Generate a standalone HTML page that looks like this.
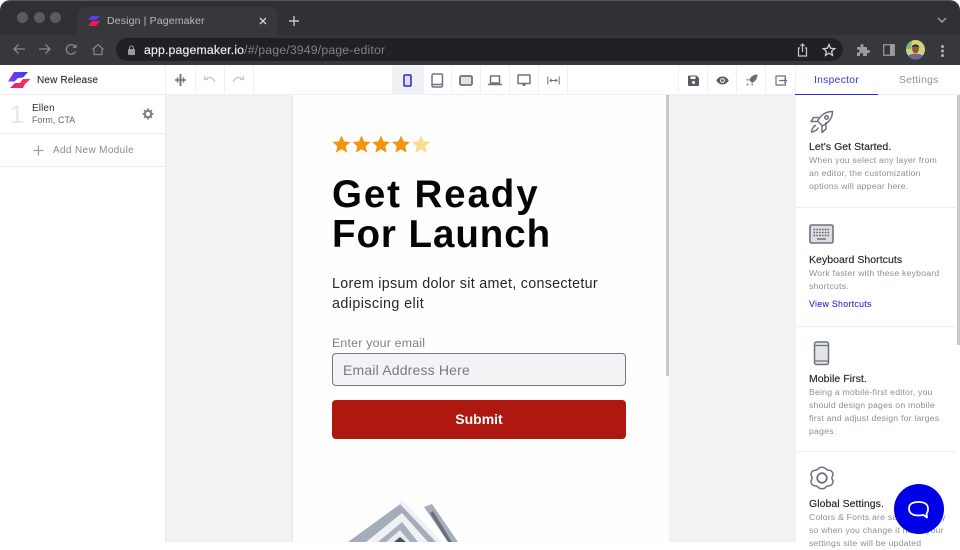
<!DOCTYPE html>
<html><head><meta charset="utf-8"><style>
html,body{margin:0;padding:0;width:960px;height:542px;overflow:hidden;background:#fff;font-family:"Liberation Sans",sans-serif}
.a{position:absolute;white-space:nowrap}
svg{position:absolute;overflow:visible}
.sep{position:absolute;top:66px;width:1px;height:29px;background:#eff0f2}
.ic{fill:none;stroke:#6b7280;stroke-width:1.5;stroke-linecap:round;stroke-linejoin:round}
.t{font-size:10.5px;color:#23262b;left:809px;letter-spacing:.05px;-webkit-text-stroke:.15px #23262b}
.d{font-size:8.7px;color:#8b9097;left:809px;line-height:13px;letter-spacing:.21px}
.hr{position:absolute;left:796px;width:160px;height:1px;background:#eceef1}
</style></head><body>
<!-- browser chrome -->
<div class="a" style="left:0;top:0;width:960px;height:38px;background:#2f3135;border-radius:10px 10px 0 0;border-top:1px solid #55565a;box-sizing:border-box"></div>
<div class="a" style="left:0;top:35px;width:960px;height:30px;background:#36383c"></div>
<div class="a" style="left:78px;top:7px;width:200px;height:31px;background:#36383c;border-radius:8px 8px 0 0"></div>
<div class="a" style="left:17px;top:12px;width:11px;height:11px;border-radius:50%;background:#5a5b5e"></div>
<div class="a" style="left:34px;top:12px;width:11px;height:11px;border-radius:50%;background:#5a5b5e"></div>
<div class="a" style="left:50px;top:12px;width:11px;height:11px;border-radius:50%;background:#5a5b5e"></div>
<svg style="left:87px;top:15px" width="14" height="12" viewBox="0 0 14 12"><path d="M4 1H13L9 5H1Z" fill="#5a3df0"/><path d="M5 6H13L9 11H1Z" fill="#f0185a"/></svg>
<div class="a" style="left:107px;top:15px;font-size:10.5px;color:#b9babc;letter-spacing:.15px">Design | Pagemaker</div>
<svg style="left:258px;top:16px" width="10" height="10" viewBox="0 0 10 10"><path d="M2 2L8 8M8 2L2 8" stroke="#d0d1d3" stroke-width="1.3" fill="none"/></svg>
<svg style="left:288px;top:15px" width="12" height="12" viewBox="0 0 12 12"><path d="M6 1V11M1 6H11" stroke="#c4c5c7" stroke-width="1.4" fill="none"/></svg>
<svg style="left:937px;top:17px" width="10" height="7" viewBox="0 0 10 7"><path d="M1 1L5 5L9 1" stroke="#a9aaac" stroke-width="1.3" fill="none"/></svg>
<svg style="left:12px;top:42px" width="14" height="14" viewBox="0 0 14 14"><path d="M13 7H2M6.500 2.500L2 7L6.500 11.500" stroke="#85878a" stroke-width="1.300" fill="none"/></svg>
<svg style="left:38px;top:42px" width="14" height="14" viewBox="0 0 14 14"><path d="M1 7H12M7.500 2.500L12 7L7.500 11.500" stroke="#85878a" stroke-width="1.300" fill="none"/></svg>
<svg style="left:65px;top:43px" width="13" height="13" viewBox="0 0 13 13"><path d="M10.500 8.500A4.800 4.800 0 1 1 10 3.500" stroke="#85878a" stroke-width="1.300" fill="none"/><path d="M11.500 1V5H7.500Z" fill="#85878a"/></svg>
<svg style="left:91px;top:43px" width="14" height="13" viewBox="0 0 14 13"><path d="M1.500 6.500L7 1.500L12.500 6.500M3 5.500V11.500H11V5.500" stroke="#85878a" stroke-width="1.200" fill="none"/></svg>
<div class="a" style="left:116px;top:38px;width:727px;height:23px;border-radius:12px;background:#202124"></div>
<svg style="left:127px;top:45px" width="9" height="10" viewBox="0 0 9 10"><rect x="1" y="4" width="7" height="6" rx="1" fill="#9a9b9d"/><path d="M2.500 4V3a2 2 0 0 1 4 0V4" stroke="#9a9b9d" fill="none"/></svg>
<div class="a" style="left:144px;top:43px;font-size:12.300px;color:#e8e9ea;letter-spacing:.15px;-webkit-text-stroke:.2px #e8e9ea">app.pagemaker.io<span style="color:#7f8184;-webkit-text-stroke:0">/#/page/3949/page-editor</span></div>
<svg style="left:796px;top:43px" width="13" height="14" viewBox="0 0 13 14"><path d="M4 5H2.500V13H10.500V5H9M6.500 9V1M4.500 3L6.500 1L8.500 3" stroke="#c6c7c9" stroke-width="1.200" fill="none"/></svg>
<svg style="left:822px;top:43px" width="14" height="14" viewBox="0 0 14 14"><path d="M7 1.500L8.600 5.300L12.700 5.600L9.600 8.300L10.500 12.300L7 10.200L3.500 12.300L4.400 8.300L1.300 5.600L5.400 5.300Z" stroke="#d0d1d3" stroke-width="1.300" fill="none"/></svg>
<svg style="left:856px;top:43px" width="14" height="14" viewBox="0 0 14 14"><path d="M1 4H4.500V2.500a1.500 1.500 0 0 1 3 0V4H11V7H12.500a1.500 1.500 0 0 1 0 3H11V13H7V11.500a1.500 1.500 0 0 0-3 0V13H1V9.500H2a1.500 1.500 0 0 0 0-3H1Z" fill="#9b9c9e"/></svg>
<svg style="left:883px;top:44px" width="12" height="12" viewBox="0 0 12 12"><rect x=".7" y=".7" width="10.600" height="10.600" stroke="#9b9c9e" stroke-width="1.200" fill="none"/><rect x="7" y="1" width="4" height="10" fill="#9b9c9e"/></svg>
<svg style="left:906px;top:40px" width="19" height="19" viewBox="0 0 19 19"><circle cx="9.500" cy="9.500" r="9.500" fill="#d9cf7a"/><path d="M0 9A9.500 9.500 0 0 1 6 .7L5 9Z" fill="#7fb98a"/><path d="M2 16C4 13 15 13 17 16A9.500 9.500 0 0 1 2 16Z" fill="#3f74c4"/><path d="M6 15H13L11 18H8Z" fill="#d0492f"/><ellipse cx="9.500" cy="9" rx="3.400" ry="4.300" fill="#8a5a3c"/><path d="M5.800 7.500C6 3.500 13 3.500 13.200 7.500C11 5.800 8 5.800 5.800 7.500Z" fill="#1d1f26"/></svg>
<div class="a" style="left:941px;top:45px;width:2.500px;height:2.500px;border-radius:50%;background:#a9aaac;box-shadow:0 4.500px 0 #a9aaac,0 9px 0 #a9aaac"></div>
<!-- toolbar -->
<div class="a" style="left:0;top:65px;width:960px;height:30px;background:#fff;border-bottom:1px solid #eceef1;box-sizing:border-box"></div>
<svg style="left:7px;top:71px" width="24" height="18" viewBox="0 0 24 18"><defs><linearGradient id="g1" x1="0" x2="1"><stop offset="0" stop-color="#8a3cf0"/><stop offset="1" stop-color="#2b3cf0"/></linearGradient><linearGradient id="g2" x1="0" x2="1"><stop offset="0" stop-color="#f0186e"/><stop offset="1" stop-color="#f03a4a"/></linearGradient></defs><path d="M7 1H21L16 6.500L11 7L7.500 10.500H1Z" fill="url(#g1)"/><path d="M16 8H23.500L18 13L16 17H3L8 12H13Z" fill="url(#g2)"/></svg>
<div class="a" style="left:37px;top:75px;font-size:10px;color:#33363b;letter-spacing:.15px;-webkit-text-stroke:.15px #33363b">New Release</div>
<div class="sep" style="left:165px"></div><div class="sep" style="left:195px"></div><div class="sep" style="left:224px"></div><div class="sep" style="left:253px"></div>
<div class="a" style="left:393px;top:66px;width:30px;height:29px;background:#f0f1f4"></div>
<div class="sep" style="left:423px"></div><div class="sep" style="left:451px"></div><div class="sep" style="left:480px"></div><div class="sep" style="left:509px"></div><div class="sep" style="left:538px"></div><div class="sep" style="left:567px"></div><div class="sep" style="left:392px"></div>
<div class="sep" style="left:678px"></div><div class="sep" style="left:707px"></div><div class="sep" style="left:736px"></div><div class="sep" style="left:765px"></div><div class="sep" style="left:795px"></div>
<svg style="left:174px;top:73px" width="13" height="14" viewBox="0 0 13 14"><path d="M6.500 1V13" stroke="#72767d" stroke-width="2"/><path d="M1 7H12M3.500 4.500V9.500M9.500 4.500V9.500" stroke="#72767d" stroke-width="1.500"/></svg>
<svg style="left:203px;top:75px" width="13" height="10" viewBox="0 0 13 10"><path d="M1.500 4.500C5 1.500 9 1.500 12 7M1.500 1V4.500H5" stroke="#c5c8cc" stroke-width="1.300" fill="none"/></svg>
<svg style="left:232px;top:75px" width="13" height="10" viewBox="0 0 13 10"><path d="M11.500 4.500C8 1.500 4 1.500 1 7M11.500 1V4.500H8" stroke="#c5c8cc" stroke-width="1.300" fill="none"/></svg>
<svg style="left:403px;top:74px" width="9" height="13" viewBox="0 0 9 13"><rect x="1" y="1" width="7" height="11" rx="1" fill="#dfe1fb" stroke="#2424e6" stroke-width="1.500"/></svg>
<svg style="left:431px;top:73px" width="13" height="15" viewBox="0 0 13 15"><rect x="1" y="1" width="10.500" height="13" rx="1.500" class="ic"/><path d="M1.500 11.500H11" class="ic"/></svg>
<svg style="left:459px;top:75px" width="14" height="11" viewBox="0 0 14 11"><rect x="1" y="1" width="12" height="9" rx="1.500" class="ic" style="fill:#e2e3e6;stroke-width:1.800"/></svg>
<svg style="left:488px;top:75px" width="14" height="11" viewBox="0 0 14 11"><path d="M2.500 1H11.500V8H2.500ZM.5 9.500H13.500" class="ic"/></svg>
<svg style="left:517px;top:74px" width="14" height="13" viewBox="0 0 14 13"><rect x="1" y="1" width="12" height="8.500" class="ic"/><rect x="5.500" y="9.500" width="3" height="2.500" fill="#6b7280"/></svg>
<svg style="left:547px;top:76px" width="13" height="9" viewBox="0 0 13 9"><path d="M.8 .5V8.500M12.200 .5V8.500M3 4.500H10M4.500 3L3 4.500L4.500 6M8.500 3L10 4.500L8.500 6" stroke="#6b7280" fill="none"/></svg>
<svg style="left:688px;top:75px" width="11" height="11" viewBox="0 0 11 11"><path d="M0 1.500A1 1 0 0 1 1 .5H8.500L11 3V10A1 1 0 0 1 10 11H1A1 1 0 0 1 0 10Z" fill="#565b64"/><rect x="2.500" y="1.500" width="5" height="2.500" fill="#fff"/><circle cx="5.500" cy="7.500" r="1.500" fill="#fff"/></svg>
<svg style="left:716px;top:76px" width="13" height="9" viewBox="0 0 13 9"><path d="M.3 4.500C3 -.8 10 -.8 12.700 4.500C10 9.800 3 9.800 .3 4.500Z" fill="#565b64"/><circle cx="6.500" cy="4.500" r="2.400" fill="#fff"/><circle cx="6.500" cy="4.500" r="1.400" fill="#565b64"/></svg>
<svg style="left:745px;top:74px" width="13" height="13" viewBox="0 0 13 13"><path d="M12.500 .5C9 .5 6 2 4 6L7 9C11 7 12.500 4 12.500 .5Z" fill="#6b7078"/><path d="M3.500 5H1L3 7.500ZM8 9.500V12L5.500 10ZM2.500 9L1 12L4 10.500Z" fill="#8a8e95"/></svg>
<svg style="left:775px;top:75px" width="12" height="11" viewBox="0 0 12 11"><path d="M10.500 3V1H1V10H10.500V8" class="ic" style="stroke-width:1.200"/><path d="M4.500 5.500H11.500M9.500 3.500L11.500 5.500L9.500 7.500" class="ic" style="stroke-width:1.200"/></svg>
<div class="a" style="left:814px;top:75px;font-size:10.300px;color:#3535e0;letter-spacing:.3px">Inspector</div>
<div class="a" style="left:899px;top:75px;font-size:10.300px;color:#8f9399;letter-spacing:.3px">Settings</div>
<div class="a" style="left:795px;top:93.500px;width:83px;height:1.500px;background:#2a2ae8"></div>
<!-- left panel -->
<div class="a" style="left:0;top:95px;width:165px;height:447px;background:#fff;border-right:1px solid #e6e8eb"></div>
<div class="a" style="left:10px;top:101px;font-size:25px;color:#e6e7ea">1</div>
<div class="a" style="left:32px;top:103px;font-size:10px;color:#2e3237;letter-spacing:.1px">Ellen</div>
<div class="a" style="left:32px;top:115px;font-size:8.800px;color:#62666d;letter-spacing:.1px">Form, CTA</div>
<svg style="left:142px;top:108px" width="12" height="12" viewBox="0 0 12 12"><circle cx="6" cy="6" r="3.200" fill="none" stroke="#7d828a" stroke-width="2.200"/><path d="M6 .5V2.500M6 9.500V11.500M.5 6H2.500M9.500 6H11.500M2.100 2.100L3.500 3.500M8.500 8.500L9.900 9.900M2.100 9.900L3.500 8.500M8.500 3.500L9.900 2.100" stroke="#7d828a" stroke-width="1.800"/></svg>
<div class="a" style="left:0;top:133px;width:165px;height:1px;background:#eceef1"></div>
<svg style="left:33px;top:145px" width="11" height="11" viewBox="0 0 11 11"><path d="M5.500 .5V10.500M.5 5.500H10.500" stroke="#9a9ea4" stroke-width="1.200"/></svg>
<div class="a" style="left:53px;top:145px;font-size:10px;color:#878b91;letter-spacing:.35px">Add New Module</div>
<div class="a" style="left:0;top:166px;width:165px;height:1px;background:#eceef1"></div>
<!-- canvas -->
<div class="a" style="left:166px;top:95px;width:630px;height:447px;background:#f1f2f4"></div>
<div class="a" style="left:292px;top:95px;width:377px;height:447px;background:#fefeff;border-left:1px solid #e9eaed;box-sizing:border-box"></div>
<div class="a" style="left:665.500px;top:95px;width:3px;height:281px;background:#c6c7ca"></div>
<svg style="left:332px;top:135px" width="100" height="19" viewBox="0 0 100 19"><defs><path id="st" d="M9.500 .5L12.100 6.400L18.500 7L13.700 11.300L15.100 17.600L9.500 14.300L3.900 17.600L5.300 11.300L.5 7L6.900 6.400Z"/></defs><use href="#st" fill="#f3940f"/><use href="#st" x="20" fill="#f3940f"/><use href="#st" x="39.500" fill="#f3940f"/><use href="#st" x="59.500" fill="#f3940f"/><use href="#st" x="79.500" fill="#fbdc8e"/></svg>
<div class="a" style="left:332px;top:175px;font-size:38.500px;line-height:40px;font-weight:bold;color:#050505"><span style="letter-spacing:1.9px">Get Ready</span><br><span style="letter-spacing:.95px">For Launch</span></div>
<div class="a" style="left:332px;top:274px;font-size:14.300px;line-height:20px;color:#25272b;letter-spacing:.3px">Lorem ipsum dolor sit amet, consectetur<br><span style="letter-spacing:.42px">adipiscing elit</span></div>
<div class="a" style="left:332px;top:336px;font-size:12.300px;color:#7c8087;letter-spacing:.23px">Enter your email</div>
<div class="a" style="left:332px;top:353px;width:294px;height:33px;background:#f2f3f5;border:1px solid #74787f;border-radius:4px;box-sizing:border-box"></div>
<div class="a" style="left:343px;top:362px;font-size:14px;color:#777b82;letter-spacing:.18px">Email Address Here</div>
<div class="a" style="left:332px;top:400px;width:294px;height:39px;background:#ae180f;border-radius:4px"></div>
<div class="a" style="left:332px;top:411px;width:294px;text-align:center;font-size:14px;font-weight:bold;color:#fff">Submit</div>
<svg style="left:340px;top:495px" width="130" height="47" viewBox="0 0 130 47"><path d="M8 47L63 7L100 47Z" fill="#a4adba"/><path d="M26 47L62 18L88 47Z" fill="#f0f2f6"/><path d="M38 47L62 27L78 47Z" fill="#a7b0be"/><path d="M46 47L60 35L70 47Z" fill="#e8ebf1"/><path d="M54 47L60 42L66 47Z" fill="#4a5058"/><path d="M60 5L66 9L102 47H96L60 9Z" fill="#eef0f4"/><path d="M84 12L92 9L118 47H108Z" fill="#a4adba"/><path d="M90 18L93 16L112 47H108Z" fill="#6a717b"/></svg>
<!-- right panel -->
<div class="a" style="left:796px;top:95px;width:164px;height:447px;background:#fff"></div>
<svg style="left:810px;top:110px" width="24" height="24" viewBox="0 0 24 24"><path d="M22.500 1.500C16 1.500 11 4.500 7.500 11L12.500 16C19 12.500 22.500 8 22.500 1.500Z" class="ic"/><circle cx="16.500" cy="7.500" r="1.700" class="ic"/><path d="M8 7.500H3.500L1 11.500H6.500M16 12.500V19L12 22.500V16M5.500 15.500C3 16.500 2 19 1.500 22C5 21.500 7 20.500 8 18" class="ic"/></svg>
<div class="a t" style="top:141px">Let's Get Started.</div>
<div class="a d" style="top:154px">When you select any layer from<br>an editor, the customization<br>options will appear here.</div>
<div class="hr" style="top:207px"></div>
<svg style="left:809px;top:224px" width="26" height="21" viewBox="0 0 26 21"><rect x="1" y="1" width="23" height="18" rx="1.500" fill="#dcdee2" stroke="#6b7280" stroke-width="1.600"/><path d="M4.500 5.500H20.500M4.500 8.500H20.500M4.500 11.500H20.500" stroke="#5f646c" stroke-width="1.500" stroke-dasharray="1.600 1.200"/><path d="M8 15H17" stroke="#5f646c" stroke-width="1.300"/></svg>
<div class="a t" style="top:254px">Keyboard Shortcuts</div>
<div class="a d" style="top:267px">Work faster with these keyboard<br>shortcuts.</div>
<div class="a" style="left:809px;top:299px;font-size:8.800px;color:#2a2adf;letter-spacing:.3px;-webkit-text-stroke:.1px #2a2adf">View Shortcuts</div>
<div class="hr" style="top:326px"></div>
<svg style="left:813px;top:341px" width="18" height="25" viewBox="0 0 18 25"><rect x="1.500" y="1" width="14" height="22.500" rx="2" fill="#e3e4e7" stroke="#6b7280" stroke-width="1.500"/><path d="M1.500 4.500H15.500M1.500 20H15.500" stroke="#6b7280" stroke-width="1.200"/></svg>
<div class="a t" style="top:373px">Mobile First.</div>
<div class="a d" style="top:386px">Being a mobile-first editor, you<br>should design pages on mobile<br>first and adjust design for larges<br>pages.</div>
<div class="hr" style="top:451px"></div>
<svg style="left:809px;top:466px" width="26" height="24" viewBox="0 0 26 24"><path d="M9.500 2.500C11 .8 15 .8 16.500 2.500C17.500 3.700 18.500 4.200 20 4.200C23 4.300 25 8 23.500 10C22.700 11.300 22.700 12.700 23.500 14C25 16 23 19.700 20 19.800C18.500 19.800 17.500 20.300 16.500 21.500C15 23.200 11 23.200 9.500 21.500C8.500 20.300 7.500 19.800 6 19.800C3 19.700 1 16 2.500 14C3.300 12.700 3.300 11.300 2.500 10C1 8 3 4.300 6 4.200C7.500 4.200 8.500 3.700 9.500 2.500Z" class="ic"/><circle cx="13" cy="12" r="4.800" class="ic" style="stroke-width:1.800"/></svg>
<div class="a t" style="top:498px">Global Settings.</div>
<div class="a d" style="top:511px">Colors &amp; Fonts are saved globally<br>so when you change it here, your<br>settings site will be updated</div>
<div class="a" style="left:957px;top:95px;width:3px;height:250px;background:#c9cacd"></div>
<div class="a" style="left:894px;top:484px;width:50px;height:50px;border-radius:50%;background:#0000e6"></div>
<svg style="left:908px;top:501px" width="21" height="18" viewBox="0 0 21 18"><path d="M10.500 1C15.500 1 20 2.500 20 7.500C20 10 19.500 11.500 18.500 12.500L19 16.500L15.500 14C14 14.300 12 14.500 10.500 14.500C5 14.500 1 12.500 1 7.500C1 2.500 5 1 10.500 1Z" fill="none" stroke="#fff" stroke-width="1.800" stroke-linejoin="round"/></svg>
</body></html>
